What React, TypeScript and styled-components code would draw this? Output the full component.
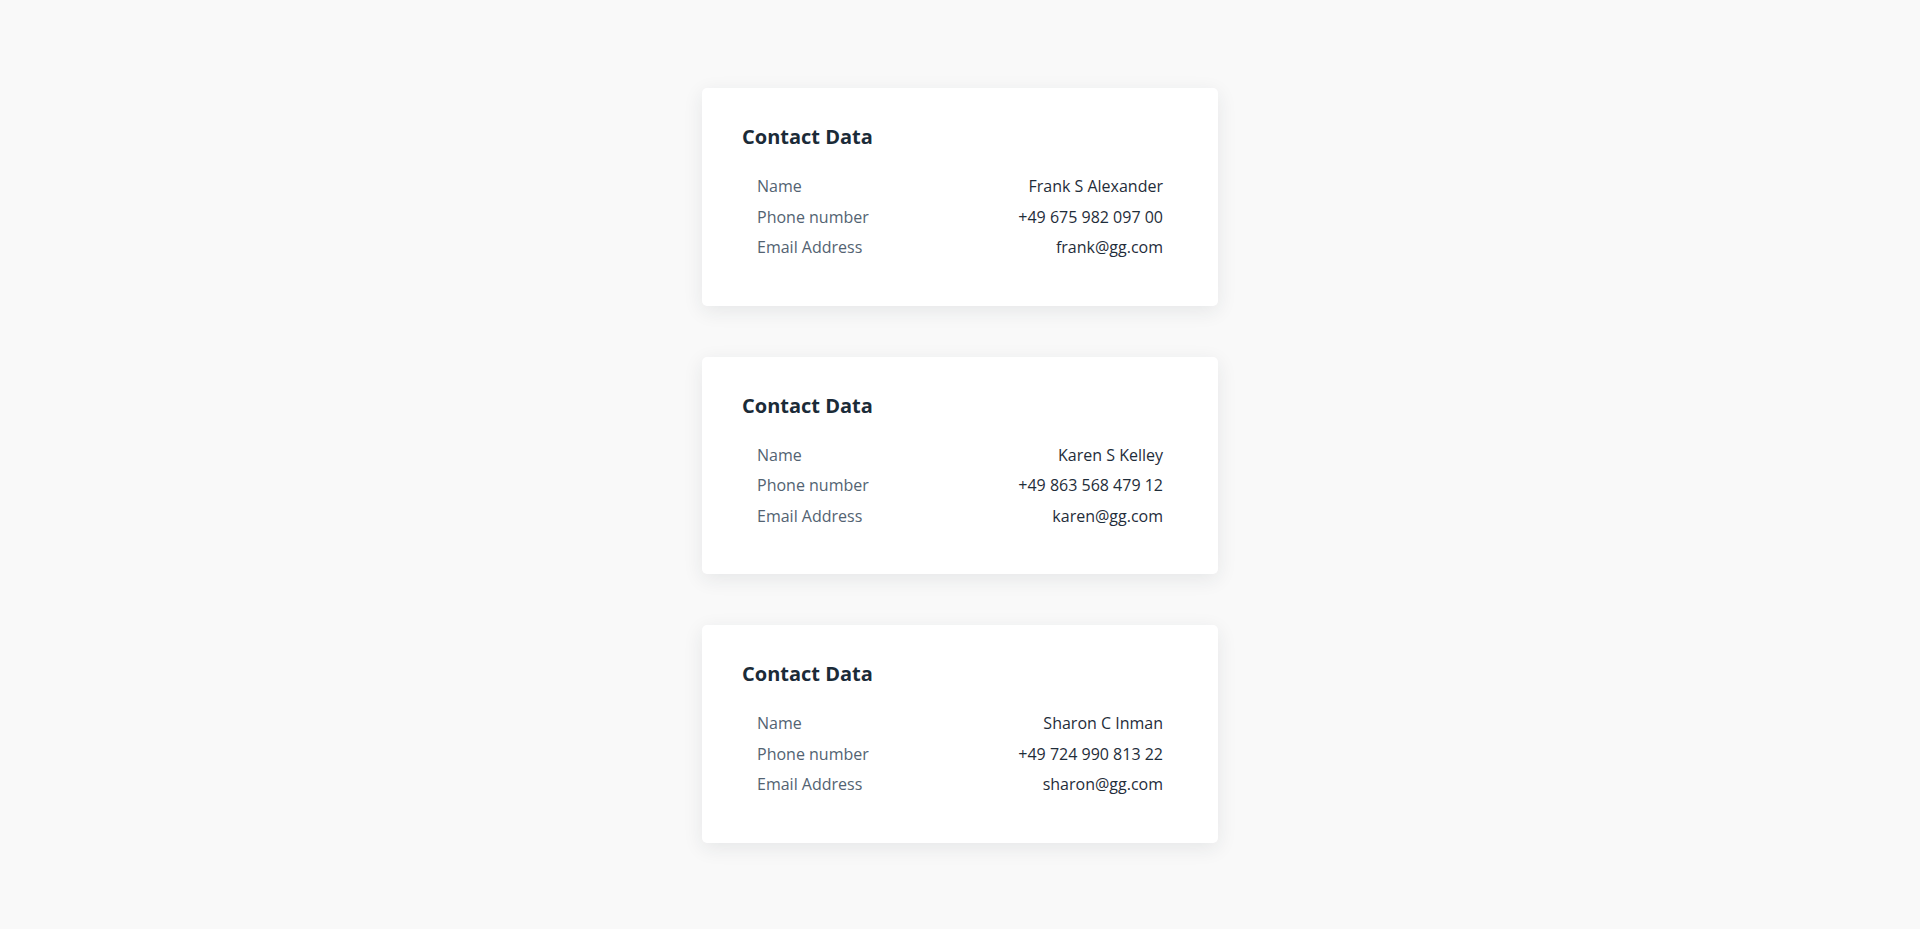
import React from 'react';
import styled, { createGlobalStyle } from 'styled-components';

const GlobalStyle = createGlobalStyle`
  html, body {
    margin: 0;
    padding: 0;
    background-color: #f9f9f9;
    font-family: 'Open Sans', 'Noto Sans', sans-serif;
  }
`;

const Page = styled.div`
  min-height: 929px;
  display: flex;
  flex-direction: column;
  align-items: center;
  gap: 51px;
  padding-top: 88px;
  box-sizing: border-box;
`;

const Card = styled.section`
  width: 516px;
  box-sizing: border-box;
  padding: 37px 40px 43px;
  background-color: #ffffff;
  border-radius: 5px;
  box-shadow: 0 5px 20px rgba(30, 40, 50, 0.09);
`;

const Title = styled.h2`
  margin: 0 0 22px;
  font-size: 20px;
  line-height: 24px;
  font-weight: 700;
  color: #1b2b38;
`;

const List = styled.dl`
  margin: 0;
  padding: 0 15px;
`;

const Row = styled.div`
  display: flex;
  justify-content: space-between;
  font-size: 16px;
  line-height: 30.5px;
`;

const Label = styled.dt`
  color: #536372;
`;

const Value = styled.dd`
  margin: 0;
  color: #1f2d3a;
  text-align: right;
`;

const contacts = [
  { name: 'Frank S Alexander', phone: '+49 675 982 097 00', email: 'frank@gg.com' },
  { name: 'Karen S Kelley', phone: '+49 863 568 479 12', email: 'karen@gg.com' },
  { name: 'Sharon C Inman', phone: '+49 724 990 813 22', email: 'sharon@gg.com' },
];

export const App = () => {
  return (
    <>
      <GlobalStyle />
      <Page>
        {contacts.map((c) => (
          <Card key={c.email}>
            <Title>Contact Data</Title>
            <List>
              <Row>
                <Label>Name</Label>
                <Value>{c.name}</Value>
              </Row>
              <Row>
                <Label>Phone number</Label>
                <Value>{c.phone}</Value>
              </Row>
              <Row>
                <Label>Email Address</Label>
                <Value>{c.email}</Value>
              </Row>
            </List>
          </Card>
        ))}
      </Page>
    </>
  );
};

export default App;
